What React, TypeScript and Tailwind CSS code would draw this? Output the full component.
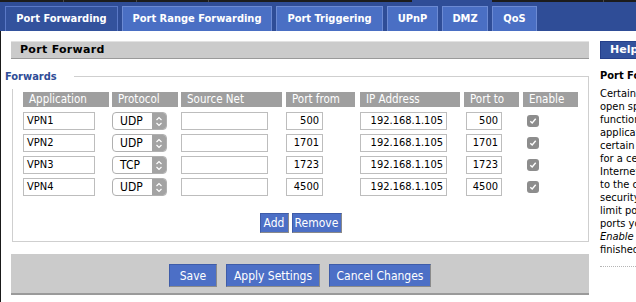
import React from "react";

const COND = "font-[family-name:'DejaVu_Sans_Condensed','DejaVu_Sans',sans-serif]";
const VERD = "font-[family-name:'DejaVu_Sans',sans-serif]";

const tabs = [
  { label: "Port Forwarding", w: "w-[113px]", active: true },
  { label: "Port Range Forwarding", w: "w-[150px]" },
  { label: "Port Triggering", w: "w-[107px]" },
  { label: "UPnP", w: "w-[51px]" },
  { label: "DMZ", w: "w-[46px]" },
  { label: "QoS", w: "w-[45px]" },
];

const rows = [
  { app: "VPN1", proto: "UDP", from: "500", ip: "192.168.1.105", to: "500" },
  { app: "VPN2", proto: "UDP", from: "1701", ip: "192.168.1.105", to: "1701" },
  { app: "VPN3", proto: "TCP", from: "1723", ip: "192.168.1.105", to: "1723" },
  { app: "VPN4", proto: "UDP", from: "4500", ip: "192.168.1.105", to: "4500" },
];

const helpLines = [
  "Certain applications may require to",
  "open specific ports in order for it to",
  "function correctly. Examples of these",
  "applications include servers and",
  "certain online games. When a request",
  "for a certain port comes in from the",
  "Internet, the router will route the data",
  "to the computer you specify. Due to",
  "security concerns, you may want to",
  "limit port forwarding to only those",
  "ports you are using, and uncheck the",
];

function Select({ value }: { value: string }) {
  return (
    <div className="w-[55px] h-[18px] rounded-[4px] border border-[#b0b0b0] bg-white flex overflow-hidden">
      <div className="flex-1 pl-[7px] text-[12px] leading-[16px] text-black">{value}</div>
      <div className="w-[14px] h-full bg-[#a3a3a3] flex items-center justify-center">
        <svg width="8" height="11" viewBox="0 0 8 11" fill="none" stroke="white" strokeWidth="1.2">
          <path d="M1.5 4 L4 1.5 L6.5 4" />
          <path d="M1.5 7 L4 9.5 L6.5 7" />
        </svg>
      </div>
    </div>
  );
}

function Checkbox() {
  return (
    <div className="w-[12px] h-[12px] rounded-[3px] bg-[#8d8d8d] flex items-center justify-center">
      <svg width="8" height="8" viewBox="0 0 8 8" fill="none" stroke="white" strokeWidth="1.4">
        <path d="M1.3 4.2 L3.2 6 L6.7 1.8" />
      </svg>
    </div>
  );
}

function Input({ value, w, right }: { value: string; w: string; right?: boolean }) {
  return (
    <div
      className={`${w} h-[18px] border border-[#bdbdbd] bg-white text-[11px] leading-[16px] text-black px-[3px] ${
        right ? "text-right" : "text-left"
      }`}
    >
      {value}
    </div>
  );
}

function BlueBtn({ label, w, h }: { label: string; w: string; h: string }) {
  return (
    <div
      className={`${w} ${h} bg-[#4c6fc6] border border-[#3e5ca9] border-r-[#8a8a8a] border-b-[#8a8a8a] text-white text-[12px] flex items-center justify-center`}
    >
      {label}
    </div>
  );
}

export default function App() {
  return (
    <div className={`w-[636px] h-[302px] overflow-hidden bg-white ${COND}`}>
      {/* top band */}
      <div className="h-[31px] bg-[#2f4d97]">
        <div className="h-[2px] flex">
          <div className="w-[63px] bg-[#1c1c1c]" />
          <div className="w-[1px] bg-[#4a4a4a]" />
          <div className="w-[72px] bg-[#1c1c1c]" />
          <div className="w-[1px] bg-[#4a4a4a]" />
          <div className="w-[71px] bg-[#1c1c1c]" />
          <div className="w-[1px] bg-[#4a4a4a]" />
          <div className="w-[203px] bg-[#1c1c1c]" />
          <div className="w-[80px]" />
          <div className="w-[111px] bg-[#1c1c1c]" />
          <div className="w-[1px] bg-[#4a4a4a]" />
          <div className="flex-1 bg-[#1c1c1c]" />
        </div>
        <div className="flex gap-[4px] pl-[5px] pt-[4px]">
          {tabs.map((t) => (
            <div
              key={t.label}
              className={`${t.w} h-[25px] flex items-center justify-center border border-b-0 text-white font-bold text-[11px] ${
                t.active ? "bg-[#33529d] border-[#5a78c6]" : "bg-[#4a6fc4] border-[#6c8ad3]"
              }`}
            >
              {t.label}
            </div>
          ))}
        </div>
      </div>

      {/* body */}
      <div className="flex h-[271px] border-l border-[#1a1a1a]">
        {/* left column */}
        <div className="w-[578px] ml-[10px] pt-[10px] shrink-0">
          <div
            className={`h-[18px] bg-[#cbcbcb] border-b border-[#9a9a9a] border-t border-t-[#e2e2e2] pl-[9px] text-[11px] leading-[16px] font-bold text-black tracking-[0.3px] ${VERD}`}
          >
            Port Forward
          </div>

          {/* fieldset */}
          <div className="relative ml-[1px] mt-[17px] h-[166px] border border-[#cfcfcf] pl-[10px] pt-[15px]">
            <div className="absolute left-[-8px] top-[-8px] h-[20px] leading-[16px] bg-white pr-[17px] text-[11px] font-bold text-[#2f4d97]">
              Forwards
            </div>

            {/* header */}
            <div className="flex h-[15px] text-[11.5px] leading-[15px] text-white">
              <div className="w-[86px] bg-[#9f9f9f] pl-[6px]">Application</div>
              <div className="w-[66px] ml-[3px] bg-[#9f9f9f] pl-[6px]">Protocol</div>
              <div className="w-[101px] ml-[3px] bg-[#9f9f9f] pl-[6px]">Source Net</div>
              <div className="w-[69px] ml-[4px] bg-[#9f9f9f] pl-[6px]">Port from</div>
              <div className="w-[100px] ml-[5px] bg-[#9f9f9f] pl-[6px]">IP Address</div>
              <div className="w-[55px] ml-[4px] bg-[#9f9f9f] pl-[6px]">Port to</div>
              <div className="w-[55px] ml-[4px] bg-[#9f9f9f] pl-[6px]">Enable</div>
            </div>

            <div className="mt-[5px] flex flex-col gap-[4px]">
              {rows.map((r) => (
                <div key={r.app} className="flex h-[18px] items-center">
                  <div className="w-[86px]">
                    <Input value={r.app} w="w-[72px]" />
                  </div>
                  <div className="w-[66px] ml-[3px]">
                    <Select value={r.proto} />
                  </div>
                  <div className="w-[101px] ml-[3px]">
                    <Input value="" w="w-[87px]" />
                  </div>
                  <div className="w-[69px] ml-[4px]">
                    <Input value={r.from} w="w-[37px]" right />
                  </div>
                  <div className="w-[100px] ml-[5px]">
                    <Input value={r.ip} w="w-[87px]" right />
                  </div>
                  <div className="w-[55px] ml-[4px] pl-[2px]">
                    <Input value={r.to} w="w-[36px]" right />
                  </div>
                  <div className="w-[55px] ml-[4px] pl-[4px]">
                    <Checkbox />
                  </div>
                </div>
              ))}
            </div>

            <div className="mt-[17px] flex justify-center gap-[3px] pr-[10px]">
              <BlueBtn label="Add" w="w-[29px]" h="h-[20px]" />
              <BlueBtn label="Remove" w="w-[50px]" h="h-[20px]" />
            </div>
          </div>

          {/* bottom bar */}
          <div className="mt-[12px] h-[41px] bg-[#cbcbcb] border-b-2 border-[#9a9a9a] pt-[10px] flex justify-center gap-[9px]">
            <BlueBtn label="Save" w="w-[48px]" h="h-[23px]" />
            <BlueBtn label="Apply Settings" w="w-[94px]" h="h-[23px]" />
            <BlueBtn label="Cancel Changes" w="w-[102px]" h="h-[23px]" />
          </div>
        </div>

        {/* right column */}
        <div className="ml-[11px] pt-[10px] w-[220px] shrink-0">
          <div className={`h-[18px] bg-[#33529d] border border-[#26408a] pl-[9px] text-[11px] leading-[16px] font-bold text-white ${VERD}`}>
            Help
          </div>
          <div className="mt-[10px] text-[11px] leading-[13px] font-bold text-black whitespace-nowrap">
            Port Forwarding
          </div>
          <div className="mt-[5px] text-[11px] leading-[13px] text-black whitespace-nowrap">
            {helpLines.map((l) => (
              <div key={l}>{l}</div>
            ))}
            <div>
              <span className="italic">Enable</span> checkbox after you are
            </div>
            <div>finished.</div>
          </div>
          <div className="mt-[10px] w-[200px] border-t border-dotted border-[#b5b5b5]" />
        </div>
      </div>
    </div>
  );
}
